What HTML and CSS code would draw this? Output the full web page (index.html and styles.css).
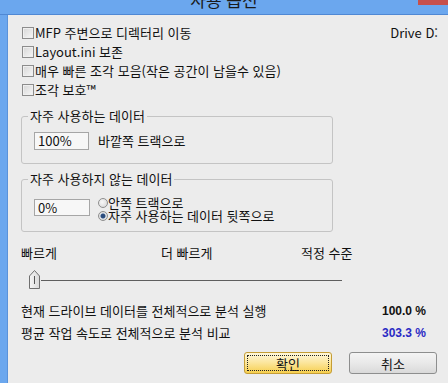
FILE: index.html
```html
<!DOCTYPE html>
<html lang="ko">
<head>
    <meta charset="UTF-8">
    <title>사용 옵션</title>
    <link rel="stylesheet" href="styles.css">
</head>
<body>
    <div class="titlebar">
        <span></span>
        <span class="title">사용 옵션</span>
        <span class="close"></span>
    </div>
    <div class="frame">
        <div class="edge"></div>
        <div class="content">
            <div class="top">
                <ul class="checks">
                    <li><span class="check"></span>MFP 주변으로 디렉터리 이동</li>
                    <li><span class="check"></span>Layout.ini 보존</li>
                    <li><span class="check"></span>매우 빠른 조각 모음(작은 공간이 남을수 있음)</li>
                    <li><span class="check"></span>조각 보호™</li>
                </ul>
                <span class="drive">Drive D:</span>
            </div>

            <fieldset class="group group-hot">
                <legend>자주 사용하는 데이터</legend>
                <div class="group-row">
                    <div class="box">100%</div>
                    <span class="hint">바깥쪽 트랙으로</span>
                </div>
            </fieldset>

            <fieldset class="group group-cold">
                <legend>자주 사용하지 않는 데이터</legend>
                <div class="group-row">
                    <div class="box box-small">0%</div>
                    <div class="radios">
                        <div class="radio-row"><span class="radio"></span>안쪽 트랙으로</div>
                        <div class="radio-row"><span class="radio checked"></span>자주 사용하는 데이터 뒷쪽으로</div>
                    </div>
                </div>
            </fieldset>

            <div class="speed-labels">
                <span>빠르게</span>
                <span>더 빠르게</span>
                <span>적정 수준</span>
            </div>
            <div class="slider">
                <svg class="thumb" width="12" height="19" viewBox="0 0 12 19">
                    <defs>
                        <linearGradient id="tg" x1="0" y1="0" x2="1" y2="0">
                            <stop offset="0" stop-color="#f6f6f6"/>
                            <stop offset="1" stop-color="#d9d9d9"/>
                        </linearGradient>
                    </defs>
                    <polygon points="0.5,6 5.5,0.5 10.5,6 10.5,18.5 0.5,18.5" fill="url(#tg)" stroke="#6f6f6f"/>
                    <line x1="5.5" y1="6" x2="5.5" y2="14" stroke="#555"/>
                </svg>
                <div class="track"></div>
            </div>

            <div class="stat">
                <span>현재 드라이브 데이터를 전체적으로 분석 실행</span>
                <span class="value">100.0 %</span>
            </div>
            <div class="stat">
                <span>평균 작업 속도로 전체적으로 분석 비교</span>
                <span class="value blue">303.3 %</span>
            </div>

            <div class="buttons">
                <button class="btn btn-default">확인</button>
                <button class="btn">취소</button>
            </div>
        </div>
    </div>
</body>
</html>
```

FILE: styles.css
```css
* {
    box-sizing: border-box;
}
body {
    margin: 0;
    width: 448px;
    height: 383px;
    overflow: hidden;
    background: #ececec;
    font-family: "Noto Sans CJK KR", sans-serif;
    font-size: 13px;
    color: #111;
}
.titlebar {
    display: grid;
    grid-template-columns: 1fr auto 1fr;
    height: 15px;
    background: #6ba7ee;
    border-bottom: 1px solid #4f88d4;
    overflow: hidden;
}
.title {
    font-size: 17px;
    line-height: 16px;
    margin-top: -8px;
    color: #1a1a1a;
}
.close {
    justify-self: end;
    width: 30px;
    height: 5px;
    background: #c7504b;
}
.frame {
    display: flex;
    height: 368px;
}
.edge {
    width: 8px;
    background: #6ba7ee;
    border-right: 1px solid #5a92da;
}
.content {
    flex: 1;
    padding: 8px 10px 0 13px;
}
.top {
    display: flex;
    justify-content: space-between;
}
.checks {
    list-style: none;
    margin: 0;
    padding: 0 0 0 1px;
}
.checks li {
    display: flex;
    align-items: center;
    height: 19px;
}
.check {
    width: 12px;
    height: 12px;
    border: 1px solid #8c8c8c;
    background: linear-gradient(135deg, #d6d6d6, #f7f7f7);
    box-shadow: inset 0 0 0 1px #efefef;
    margin-right: 1px;
}
.drive {
    line-height: 19px;
}
.group {
    width: 312px;
    margin: 0;
    border: 1px solid #c4c4c4;
    border-radius: 3px;
    padding: 8px 12px 13px 12px;
}
.group legend {
    margin-left: -6px;
    padding: 0 2px;
    line-height: 14px;
}
.group-hot {
    margin-top: 10px;
}
.group-cold {
    margin-top: 8px;
    padding-top: 10px;
    padding-bottom: 9px;
}
.group-row {
    display: flex;
    align-items: center;
}
.group-cold .group-row {
    align-items: flex-start;
}
.box {
    width: 55px;
    height: 18px;
    border: 1px solid #a6a6a6;
    background: #f7f7f7;
    padding-left: 3px;
    line-height: 16px;
}
.box-small {
    width: 56px;
    height: 17px;
    line-height: 15px;
    margin-top: 3px;
}
.hint {
    margin-left: 9px;
}
.radios {
    margin-left: 8px;
}
.radio-row {
    display: flex;
    align-items: center;
    height: 13px;
    line-height: 13px;
}
.radio {
    width: 10px;
    height: 10px;
    border-radius: 50%;
    border: 1px solid #8e8e8e;
    background: radial-gradient(circle at 40% 40%, #f8f8f8, #d4d4d4);
}
.radio.checked {
    background: radial-gradient(circle, #2c4c7c 0 2px, #8aa0c0 2.5px, #e6e6e6 3px, #d0d0d0);
}
.speed-labels {
    display: grid;
    grid-template-columns: 140px 140px auto;
    margin-top: 14px;
    line-height: 14px;
}
.slider {
    display: flex;
    align-items: flex-start;
    width: 313px;
    margin: 10px 0 0 8px;
}
.thumb {
    display: block;
}
.track {
    flex: 1;
    height: 1px;
    margin-top: 10px;
    background: #5e5e5e;
}
.stat {
    display: flex;
    justify-content: space-between;
    line-height: 16px;
    padding-right: 12px;
    margin-top: 6px;
}
.slider + .stat {
    margin-top: 14px;
}
.value {
    font-family: "Liberation Sans", sans-serif;
    font-size: 12px;
    font-weight: bold;
    color: #111;
}
.value.blue {
    color: #2a2ac4;
}
.buttons {
    display: flex;
    justify-content: flex-end;
    gap: 17px;
    margin-top: 11px;
    padding-right: 1px;
}
.btn {
    width: 88px;
    height: 22px;
    padding: 0;
    font-family: "Noto Sans CJK KR", sans-serif;
    font-size: 13px;
    color: #111;
    border: 1px solid #8d8e8e;
    border-radius: 3px;
    background: linear-gradient(#f4f4f4, #e9e9e9 50%, #d9d9d9);
}
.btn-default {
    border-color: #c59d35;
    background: linear-gradient(#fff8dc, #fbe59a 50%, #f6cf4e);
    outline: 1px dotted #222;
    outline-offset: -4px;
}
```
